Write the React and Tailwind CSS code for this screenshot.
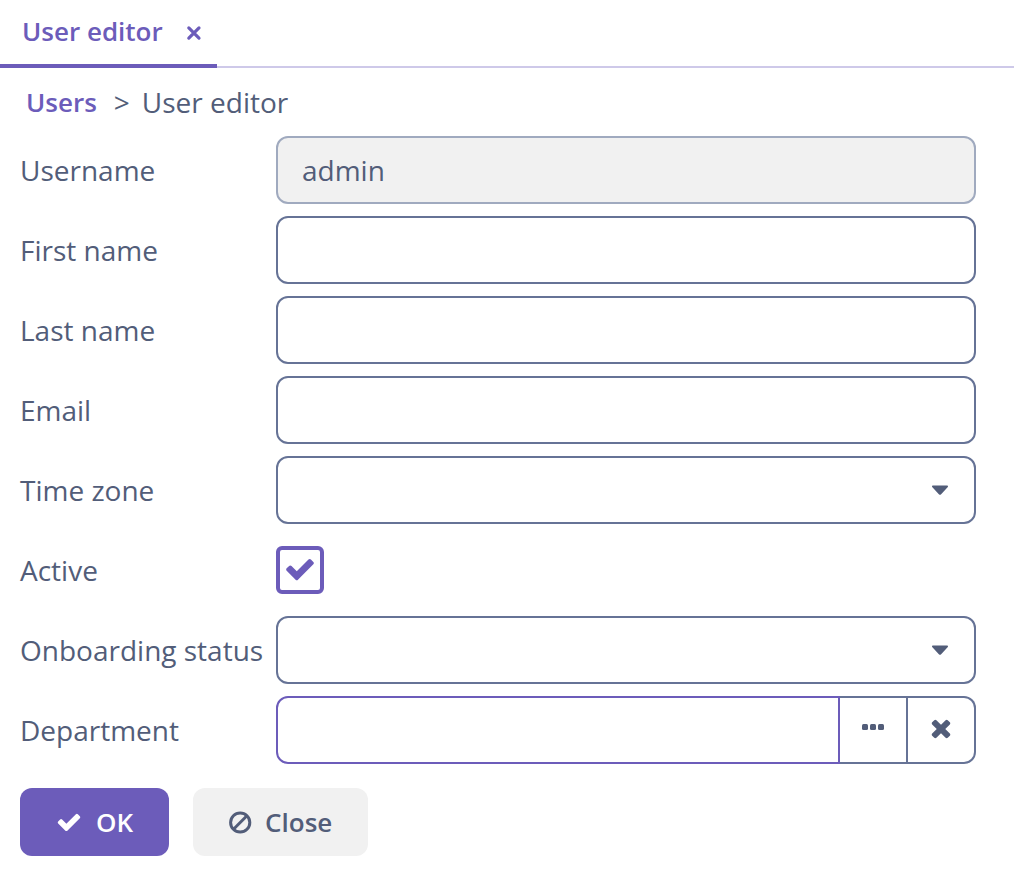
import React from 'react';

const CHECK =
  'M1671 566q0 40-28 68l-724 724-136 136q-28 28-68 28t-68-28l-136-136-362-362q-28-28-28-68t28-68l136-136q28-28 68-28t68 28l294 295 656-657q28-28 68-28t68 28l136 136q28 28 28 68z';
const TIMES =
  'M1490 1322q0 40-28 68l-136 136q-28 28-68 28t-68-28l-294-294-294 294q-28 28-68 28t-68-28l-136-136q-28-28-28-68t28-68l294-294-294-294q-28-28-28-68t28-68l136-136q28-28 68-28t68 28l294 294 294-294q28-28 68-28t68 28l136 136q28 28 28 68t-28 68l-294 294 294 294q28 28 28 68z';

function Glyph({ d, className }) {
  return (
    <svg viewBox="0 0 1792 1792" fill="currentColor" className={className} aria-hidden="true">
      <path d={d} />
    </svg>
  );
}

const fieldBox = 'h-[68px] w-full min-w-0 rounded-xl border-2 border-[#667396] bg-white px-6 text-[28px] outline-none';

function Row({ id, label, children }) {
  return (
    <div className="grid grid-cols-[256px_minmax(0,1fr)] items-center">
      <label htmlFor={id} className="whitespace-nowrap">
        {label}
      </label>
      <div className="flex h-[68px] items-center">{children}</div>
    </div>
  );
}

function SelectField({ id }) {
  return (
    <div className="relative w-full">
      <select id={id} defaultValue="" className={`${fieldBox} block appearance-none`}>
        <option value=""></option>
      </select>
      <svg
        viewBox="0 0 16 10"
        fill="currentColor"
        className="pointer-events-none absolute right-7 top-[29px] h-[10px] w-4"
        aria-hidden="true"
      >
        <path d="M.8 .5h14.400q.8 0 .8.900 0 .5-.4.900l-6.700 7.100q-.9.900-1.800 0L.4 2.300Q0 1.900 0 1.400 0 .5.800.5z" />
      </svg>
    </div>
  );
}

export default function App() {
  return (
    <div className="min-h-screen bg-white font-['Open_Sans',sans-serif] text-[28px] leading-[38px] text-[#525d79]">
      <div className="flex h-[68px] items-end">
        <div className="flex h-[68px] items-center border-b-4 border-[#6c5cba] pb-[2px] pl-[22px] pr-[15px] text-[#6c5cba]">
          <button type="button" className="text-[26px] font-semibold leading-[36px]">
            User editor
          </button>
          <button type="button" aria-label="Close tab" className="ml-[23px] flex size-4 items-center justify-center">
            <svg
              viewBox="0 0 16 16"
              className="size-4 overflow-visible"
              fill="none"
              stroke="currentColor"
              strokeWidth="3.2"
              strokeLinecap="round"
              aria-hidden="true"
            >
              <path d="M2.800 4.900l10.200 10.200M13 4.900L2.800 15.100" />
            </svg>
          </button>
        </div>
        <div className="h-[2px] flex-1 bg-[#cec9e9]" />
      </div>

      <nav aria-label="Breadcrumb" className="flex h-[68px] items-center pl-[26px]">
        <a href="#users" className="text-[26px] font-semibold text-[#6c5cba]">
          Users
        </a>
        <span className="ml-[17px] mr-3 text-[28px]">&gt;</span>
        <span>User editor</span>
      </nav>

      <form className="pl-5 pr-[38px]" onSubmit={(e) => e.preventDefault()}>
        <div className="flex flex-col gap-3">
          <Row id="username" label="Username">
            <input
              id="username"
              defaultValue="admin"
              readOnly
              className="h-[68px] w-full min-w-0 rounded-xl border-2 border-[#a0aabf] bg-[#f1f1f1] px-6 text-[28px] outline-none"
            />
          </Row>
          <Row id="first" label="First name">
            <input id="first" className={fieldBox} />
          </Row>
          <Row id="last" label="Last name">
            <input id="last" className={fieldBox} />
          </Row>
          <Row id="email" label="Email">
            <input id="email" type="email" className={fieldBox} />
          </Row>
          <Row id="zone" label="Time zone">
            <SelectField id="zone" />
          </Row>
          <Row id="active" label="Active">
            <div className="relative size-12">
              <input
                id="active"
                type="checkbox"
                defaultChecked
                className="peer block size-12 appearance-none rounded-md border-4 border-[#6c5cba] bg-white"
              />
              <Glyph
                d={CHECK}
                className="pointer-events-none absolute left-2 top-[7px] hidden size-8 text-[#6c5cba] peer-checked:block"
              />
            </div>
          </Row>
          <Row id="status" label="Onboarding status">
            <SelectField id="status" />
          </Row>
          <Row id="department" label="Department">
            <input
              id="department"
              className="h-[68px] min-w-0 flex-1 rounded-l-xl border-2 border-[#6c5cba] bg-white px-6 text-[28px] outline-none"
            />
            <button
              type="button"
              aria-label="Select department"
              className="flex h-[68px] w-[68px] items-center justify-center border-y-2 border-r-2 border-[#667396] pb-[6px]"
            >
              <svg viewBox="0 0 22 6" fill="currentColor" className="h-[6px] w-[22px]" aria-hidden="true">
                <rect width="6" height="6" rx="1.500" />
                <rect x="8" width="6" height="6" rx="1.500" />
                <rect x="16" width="6" height="6" rx="1.500" />
              </svg>
            </button>
            <button
              type="button"
              aria-label="Clear department"
              className="flex h-[68px] w-[68px] items-center justify-center rounded-r-xl border-y-2 border-r-2 border-[#667396] pb-1"
            >
              <Glyph d={TIMES} className="size-7" />
            </button>
          </Row>
        </div>

        <div className="mt-6 flex gap-6 text-[26px] font-semibold">
          <button type="submit" className="flex h-[68px] items-center gap-[14px] rounded-xl bg-[#6c5cba] px-9 text-white">
            <Glyph d={CHECK} className="size-[26px]" />
            OK
          </button>
          <button type="button" className="flex h-[68px] items-center gap-[14px] rounded-xl bg-[#f1f1f1] px-9">
            <svg
              viewBox="0 0 22 24"
              fill="none"
              stroke="currentColor"
              strokeWidth="3"
              className="h-6 w-[22px] overflow-visible"
              aria-hidden="true"
            >
              <circle cx="11.200" cy="12.500" r="9.600" />
              <path d="M4.500 19.200L17.900 5.800" />
            </svg>
            Close
          </button>
        </div>
      </form>
    </div>
  );
}
